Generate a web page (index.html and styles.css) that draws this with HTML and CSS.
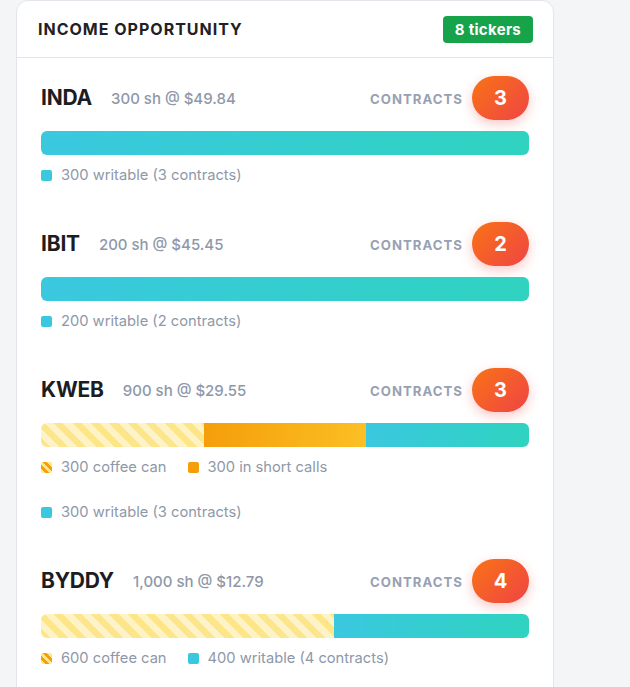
FILE: index.html
```html
<!DOCTYPE html>
<html>
<head>
<meta charset="utf-8">
<link rel="stylesheet" href="styles.css">
</head>
<body>
<div class="card">
  <div class="card-header">
    <div class="title">INCOME OPPORTUNITY</div>
    <div class="count">8 tickers</div>
  </div>

  <div class="row">
    <div class="row-top">
      <div class="ident"><span class="ticker">INDA</span><span class="sub">300 sh @ $49.84</span></div>
      <div class="contracts"><span class="clabel">CONTRACTS</span><span class="cbadge">3</span></div>
    </div>
    <div class="bar"><div class="seg writable" style="width:100%"></div></div>
    <div class="legend">
      <div class="item"><span class="sw sw-writable"></span>300 writable (3 contracts)</div>
    </div>
  </div>

  <div class="row">
    <div class="row-top">
      <div class="ident"><span class="ticker">IBIT</span><span class="sub">200 sh @ $45.45</span></div>
      <div class="contracts"><span class="clabel">CONTRACTS</span><span class="cbadge">2</span></div>
    </div>
    <div class="bar"><div class="seg writable" style="width:100%"></div></div>
    <div class="legend">
      <div class="item"><span class="sw sw-writable"></span>200 writable (2 contracts)</div>
    </div>
  </div>

  <div class="row">
    <div class="row-top">
      <div class="ident"><span class="ticker">KWEB</span><span class="sub">900 sh @ $29.55</span></div>
      <div class="contracts"><span class="clabel">CONTRACTS</span><span class="cbadge">3</span></div>
    </div>
    <div class="bar">
      <div class="seg coffee" style="width:33.3333%"></div>
      <div class="seg short" style="width:33.3333%"></div>
      <div class="seg writable" style="width:33.3334%"></div>
    </div>
    <div class="legend">
      <div class="item"><span class="sw sw-coffee"></span>300 coffee can</div>
      <div class="item"><span class="sw sw-short"></span>300 in short calls</div>
      <div class="item"><span class="sw sw-writable"></span>300 writable (3 contracts)</div>
    </div>
  </div>

  <div class="row">
    <div class="row-top">
      <div class="ident"><span class="ticker">BYDDY</span><span class="sub">1,000 sh @ $12.79</span></div>
      <div class="contracts"><span class="clabel">CONTRACTS</span><span class="cbadge">4</span></div>
    </div>
    <div class="bar">
      <div class="seg coffee" style="width:60%"></div>
      <div class="seg writable" style="width:40%"></div>
    </div>
    <div class="legend">
      <div class="item"><span class="sw sw-coffee"></span>600 coffee can</div>
      <div class="item"><span class="sw sw-writable"></span>400 writable (4 contracts)</div>
    </div>
  </div>
</div>
</body>
</html>
```

FILE: styles.css
```css
html, body {
  margin: 0;
  padding: 0;
  background: #f4f5f7;
  font-family: Inter, "Liberation Sans", sans-serif;
}
body {
  padding: 0 77px 0 16px;
}
.card {
  width: 536px;
  background: #ffffff;
  border: 1px solid #e2e5ea;
  border-radius: 12px;
  margin-top: 0;
  min-height: 720px;
}
.card-header {
  height: 56px;
  border-bottom: 1px solid #e2e5ea;
  display: flex;
  align-items: center;
  justify-content: space-between;
  padding: 0 20px 0 21px;
}
.title {
  font-size: 16px;
  font-weight: 700;
  letter-spacing: 1px;
  color: #1f2126;
}
.count {
  background: #16a34a;
  color: #fff;
  font-size: 15px;
  font-weight: 700;
  letter-spacing: 0.3px;
  padding: 0 12px;
  height: 27px;
  line-height: 27px;
  border-radius: 4px;
  margin-top: 1px;
}
.row {
  padding: 18px 24px 19px 24px;
}
.row-top {
  display: flex;
  align-items: center;
  justify-content: space-between;
  height: 44px;
}
.ident {
  display: flex;
  align-items: center;
  gap: 19px;
}
.ticker {
  font-size: 21px;
  font-weight: 700;
  color: #1c1d21;
  letter-spacing: -0.2px;
  position: relative;
  top: -1px;
}
.sub {
  font-size: 15px;
  font-weight: 500;
  color: #8e98a9;
}
.contracts {
  display: flex;
  align-items: center;
  gap: 9px;
}
.clabel {
  font-size: 13.2px;
  font-weight: 700;
  letter-spacing: 1px;
  color: #97a1b3;
  margin-top: 1px;
}
.cbadge {
  width: 57px;
  height: 44px;
  border-radius: 22px;
  background: linear-gradient(135deg, #f97316 0%, #ef4444 100%);
  box-shadow: 0 4px 12px rgba(239, 68, 68, 0.3);
  color: #fff;
  font-size: 20px;
  font-weight: 700;
  display: flex;
  align-items: center;
  justify-content: center;
}
.bar {
  margin-top: 11px;
  height: 24px;
  border-radius: 6px;
  overflow: hidden;
  display: flex;
}
.seg {
  height: 100%;
}
.writable {
  background: linear-gradient(90deg, #3ac8df 0%, #2fd3c0 100%);
}
.short {
  background: linear-gradient(90deg, #f59e0b 0%, #fbbf24 100%);
}
.coffee {
  background: repeating-linear-gradient(45deg, #fde68a 0 6.5px, #fef3c7 6.5px 13px);
}
.legend {
  margin-top: 10px;
  display: flex;
  flex-wrap: wrap;
  column-gap: 21px;
  row-gap: 25px;
}
.item {
  display: flex;
  align-items: center;
  gap: 9px;
  font-size: 14.7px;
  color: #8e98a9;
  height: 20px;
}
.sw {
  width: 11px;
  height: 11px;
  border-radius: 2px;
  flex: none;
}
.sw-writable {
  background: #3ac8df;
}
.sw-short {
  background: #f59e0b;
}
.sw-coffee {
  background: repeating-linear-gradient(45deg, #fde68a 0 3px, #f59e0b 3px 6px);
}
```
